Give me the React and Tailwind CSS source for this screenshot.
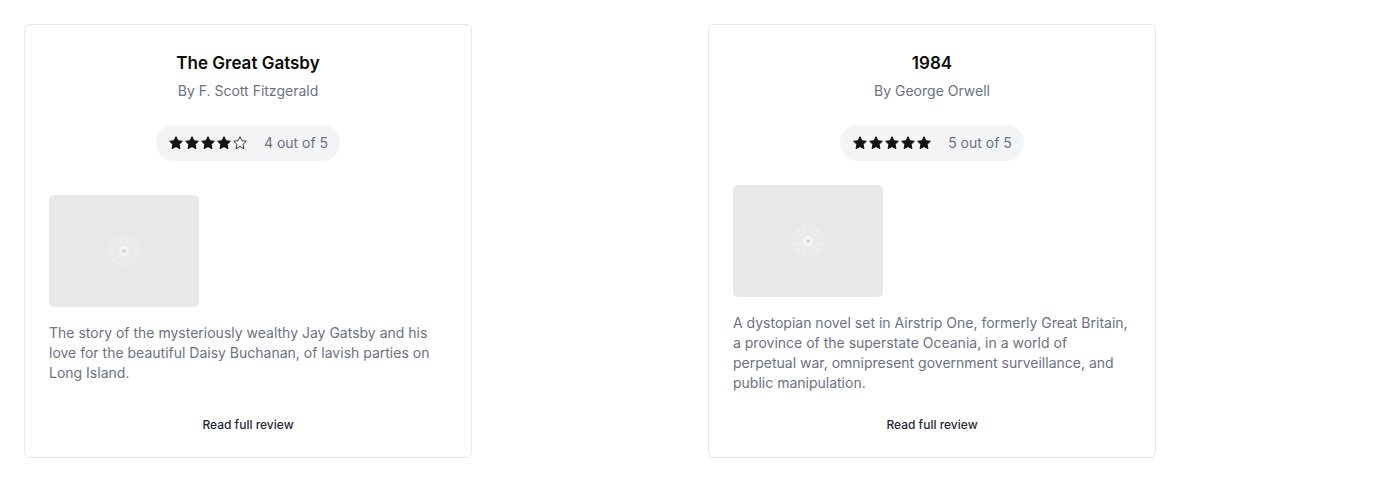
const BOOKS = [
  {
    title: 'The Great Gatsby',
    author: 'F. Scott Fitzgerald',
    rating: 4,
    description:
      'The story of the mysteriously wealthy Jay Gatsby and his love for the beautiful Daisy Buchanan, of lavish parties on Long Island.',
  },
  {
    title: '1984',
    author: 'George Orwell',
    rating: 5,
    description:
      'A dystopian novel set in Airstrip One, formerly Great Britain, a province of the superstate Oceania, in a world of perpetual war, omnipresent government surveillance, and public manipulation.',
  },
]

const STAR = 'M12 2.5l2.9 6.1 6.6.8-4.9 4.6 1.3 6.6L12 17.3l-5.9 3.3 1.3-6.6-4.9-4.6 6.6-.8z'

function Star({ filled }) {
  return (
    <svg width="16" height="16" viewBox="0 0 24 24" className="shrink-0">
      {filled ? (
        <path d={STAR} fill="#111111" stroke="#111111" strokeWidth="1.5" strokeLinejoin="round" />
      ) : (
        <path d={STAR} fill="none" stroke="#222222" strokeWidth="1.3" strokeLinejoin="round" />
      )}
    </svg>
  )
}

function Placeholder() {
  const rays = Array.from({ length: 12 }, (_, i) => i * 30)
  return (
    <div className="w-[150px] h-[112px] rounded-[5px] bg-[#e8e8e8] flex items-center justify-center">
      <svg width="40" height="40" viewBox="0 0 40 40">
        <circle cx="20" cy="20" r="16" fill="#ececec" />
        {rays.map((a) => (
          <line
            key={a}
            x1="20"
            y1="20"
            x2={20 + 16 * Math.cos((a * Math.PI) / 180)}
            y2={20 + 16 * Math.sin((a * Math.PI) / 180)}
            stroke="#e7e7e7"
            strokeWidth="1"
          />
        ))}
        <circle cx="20" cy="20" r="5" fill="#f5f5f5" />
        <rect x="18" y="18.5" width="4" height="3" rx="0.5" fill="#d4d4d4" />
      </svg>
    </div>
  )
}

function BookCard({ book }) {
  return (
    <div className="w-full max-w-md flex flex-col border border-[#e5e7eb] rounded-md bg-white p-6">
      <div className="flex flex-col items-center">
        <h2 className="text-[17px] leading-7 font-semibold text-[#0a0a0a]">{book.title}</h2>
        <p className="mt-1 text-sm leading-5 text-[#6b7280]">By {book.author}</p>
        <div className="mt-6 flex items-center gap-4 rounded-full bg-[#f3f4f6] px-3 py-2">
          <div className="flex items-center">
            {[1, 2, 3, 4, 5].map((n) => (
              <Star key={n} filled={n <= book.rating} />
            ))}
          </div>
          <span className="text-sm leading-5 text-[#6b7280]">{book.rating} out of 5</span>
        </div>
      </div>
      <div className="flex-1 flex flex-col justify-center pt-6">
        <Placeholder />
        <p className="mt-4 text-sm leading-5 text-[#6b7280]">{book.description}</p>
      </div>
      <div className="mt-6 flex justify-center">
        <button className="text-xs leading-4 font-medium text-[#1f2937]">Read full review</button>
      </div>
    </div>
  )
}

export default function App() {
  return (
    <div className="min-h-screen bg-white p-6 font-['Inter',sans-serif]">
      <div className="grid grid-cols-2 gap-10">
        {BOOKS.map((b) => (
          <BookCard key={b.title} book={b} />
        ))}
      </div>
    </div>
  )
}
